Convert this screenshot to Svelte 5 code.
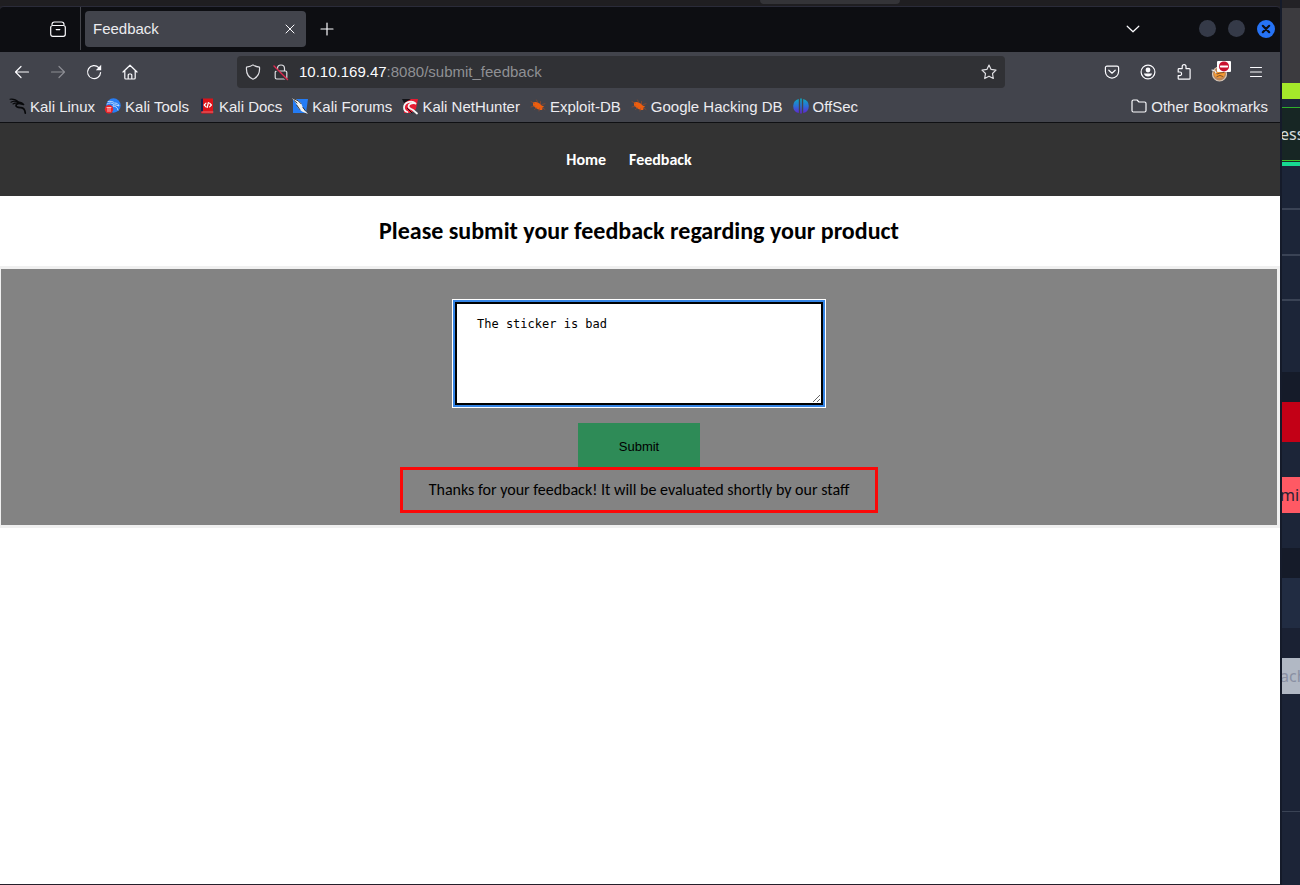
<script>
  let feedback = $state('The sticker is bad');
  let address = $state('10.10.169.47:8080/submit_feedback');

  const bookmarks = [
    { id: 'linux', label: 'Kali Linux' },
    { id: 'tools', label: 'Kali Tools' },
    { id: 'docs', label: 'Kali Docs' },
    { id: 'forums', label: 'Kali Forums' },
    { id: 'hunter', label: 'Kali NetHunter' },
    { id: 'exploit', label: 'Exploit-DB' },
    { id: 'exploit', label: 'Google Hacking DB' },
    { id: 'offsec', label: 'OffSec' }
  ];

  // Stacked bands of the window behind the browser: height, colour, optional text
  const bands = [
    { h: 8, c: '#232226' },
    { h: 75, c: '#3c3b3f' },
    { h: 16, c: '#a4e82a' },
    { h: 8, c: '#1c2639' },
    { h: 1, c: '#2fae2c' },
    { h: 52, c: '#172624', t: 'ess', ink: '#d8dcdc' },
    { h: 1, c: '#3fc52b' },
    { h: 1, c: '#172624' },
    { h: 4, c: '#17d992' },
    { h: 42, c: '#1c2538' },
    { h: 2, c: '#3a4355' },
    { h: 44, c: '#1c2538' },
    { h: 2, c: '#3a4355' },
    { h: 43, c: '#1c2538' },
    { h: 2, c: '#3a4355' },
    { h: 71, c: '#1c2538' },
    { h: 30, c: '#151b29' },
    { h: 40, c: '#c30016' },
    { h: 35, c: '#1c2538' },
    { h: 36, c: '#ff5964', t: 'min', ink: '#2b2233' },
    { h: 35, c: '#1c2538' },
    { h: 30, c: '#151b29' },
    { h: 50, c: '#212c42' },
    { h: 30, c: '#1a2133' },
    { h: 36, c: '#b1b8c4', t: 'ach', ink: '#8a90a3' },
    { h: 117, c: '#1b2336' },
    { h: 1, c: '#3a4355' }
  ];
</script>

{#snippet favicon(id)}
  <svg class="fav" viewBox="0 0 16 16" aria-hidden="true">
    {#if id === 'linux'}
      <path d="M0 1.2C3 .8 6 1.4 8.5 4M1 4.2C3.5 2.8 6 3.2 8.3 4.4M3 6C5 4.7 7 4.7 9 5" fill="none" stroke="#08090b" stroke-width="1.1" />
      <path d="M8 4.5C10 4 12 4.5 13.5 6.5L11.5 6C9 5 6 5.5 6 7.5C6 9.5 8.5 9.5 11 9.7C13.5 10 15 12 15.3 15.2" fill="none" stroke="#08090b" stroke-width="1.7" />
    {:else if id === 'tools'}
      <circle cx="8.5" cy="7.5" r="7.2" fill="#287df4" />
      <path d="M3 3.5C6 3 8 3.5 9.5 5C12 5 13.5 6 14 8L11 7C8.5 6.5 7.5 7 8 8.2C10.5 8 12.5 9.5 13 12M2 6C4.5 4.5 6.5 4.7 8.5 6" fill="none" stroke="#c9e2ff" stroke-width=".9" />
      <circle cx="4" cy="11.3" r="4.2" fill="#ea2429" />
      <path d="M2 9.5h4M3 9.5v4M5 9.5v4" fill="none" stroke="#ffb9b9" stroke-width="1" />
    {:else if id === 'docs'}
      <path d="M2 1.5Q2 .5 3 .5h11v15H3q-1 0-1-1z" fill="#dc1219" />
      <path d="M2 1.5Q2 .5 3 .5h1v13H2z" fill="#17214e" />
      <path d="M3 14h11" stroke="#e59a9a" stroke-width=".7" />
      <path d="M7 5.2L5.2 7 7 8.8M10.6 5.2L12.4 7l-1.8 1.8M9.4 4.5L8.2 9.5" fill="none" stroke="#fff" stroke-width="1.2" />
    {:else if id === 'forums'}
      <path d="M1 1h15l-2 14H1z" fill="#247cf5" />
      <path d="M0 0l5 1.8 4 3.2 2 5 5 6-6-2.5L6 10 4.5 6z" fill="#f0f0ed" />
      <path d="M1 .5l5 2.2 3 3M4.8 7.2l3 4.3M2.2 2.6L5 5M11 9.5l2.5 3.5" fill="none" stroke="#252627" stroke-width=".9" />
    {:else if id === 'hunter'}
      <path d="M3 1h13l-2 10-5 4H2z" fill="#e61b32" />
      <path d="M0 1h9L2 5z" fill="#111216" />
      <path d="M13.5 5.5C9.5 1.5 2 4.5 2 9.5c0 2.5 1.5 4 3.5 4.5M13.5 5.5C10 4.5 6.5 6 6.5 8.5c0 2 2.5 2.2 4.5 3.5l4 3.5" fill="none" stroke="#f4f4f4" stroke-width="1.8" />
      <path d="M5.5 10.5l4.5 4.5" stroke="#111216" stroke-width="1" />
    {:else if id === 'exploit'}
      <path d="M3 4.5C5.5 3 9.5 4.5 11.7 7.5l2.6 1.2-1.8.7-.3 2.6C9 12.4 4.8 10 3 7.3z" fill="#ef5e0e" />
      <path d="M1 3.5l3.5 2M6.5 2L8 5M10.5 3.5v3M1 9l4-1M4.5 11.5L7 9.5M9 13l.8-3M12 6.5l3-.8M12 9.5l3 2" fill="none" stroke="#a94c25" stroke-width=".6" />
    {:else}
      <defs>
        <linearGradient id="sphere" x2="0" y2="1">
          <stop offset="0" stop-color="#0cabbf" /><stop offset=".5" stop-color="#2b6fd8" /><stop offset="1" stop-color="#6322cf" />
        </linearGradient>
      </defs>
      <path d="M5.8.9v14.2A7.3 7.3 0 0 1 5.8.9zM7.2.4h1.6v15.2H7.2zM10.2.9v14.2a7.3 7.3 0 0 0 0-14.2z" fill="url(#sphere)" />
    {/if}
  </svg>
{/snippet}

<div class="desktop">
  <div class="front">
    <div class="strip"><i></i></div>
    <div class="window">
      <header class="tabs">
        <button class="icon view" aria-label="Firefox View">
          <svg viewBox="0 0 18 18"><path d="M3 4.4Q3 2 5.4 2h7.2Q15 2 15 4.4" /><rect x="1.7" y="5.5" width="14.6" height="10.8" rx="2" /><path d="M7.2 9.6h3.6" /></svg>
        </button>
        <div class="tab">
          <span>Feedback</span>
          <button class="icon" aria-label="Close tab"><svg class="x" viewBox="0 0 10 10"><path d="M1 1l8 8M9 1L1 9" /></svg></button>
        </div>
        <button class="icon plus" aria-label="New tab"><svg viewBox="0 0 16 16"><path d="M8 2v12M2 8h12" /></svg></button>
        <button class="icon list" aria-label="List all tabs"><svg viewBox="0 0 16 16"><path d="M2.2 5.2l5.8 5.6 5.8-5.6" /></svg></button>
        <div class="controls">
          <button class="dot" aria-label="Minimize"></button>
          <button class="dot" aria-label="Maximize"></button>
          <button class="dot close" aria-label="Close"><svg viewBox="0 0 10 10"><path d="M1.8 1.8l6.4 6.4M8.2 1.8L1.8 8.2" /></svg></button>
        </div>
      </header>

      <div class="toolbar">
        <div class="group nav">
          <button class="icon" aria-label="Back"><svg viewBox="0 0 16 16"><path d="M14.5 8H1.5M7 2.5L1.5 8 7 13.5" /></svg></button>
          <button class="icon dim" aria-label="Forward"><svg viewBox="0 0 16 16"><path d="M1.5 8h13M9 2.5L14.5 8 9 13.5" /></svg></button>
          <button class="icon" aria-label="Reload"><svg viewBox="0 0 16 16"><path d="M14.6 8.5A6.5 6.5 0 1 1 12.8 3.6" /><path d="M15.2 .8v5.4H9.8z" fill="#fbfbfe" stroke="none" /></svg></button>
          <button class="icon" aria-label="Home"><svg viewBox="0 0 16 16"><path d="M1 8L8 1.2 15 8M2.8 6.5V14q0 1 1 1h8.4q1 0 1-1V6.5M6.2 15v-4q0-1 1-1h1.6q1 0 1 1v4" /></svg></button>
        </div>
        <div class="urlbar">
          <svg viewBox="0 0 16 16" aria-hidden="true"><path d="M8 .9C6 2.5 3.8 2.9 1.5 3.2C1 9 3.2 13.2 8 15.2C12.8 13.2 15 9 14.5 3.2C12.2 2.9 10 2.5 8 .9z" /></svg>
          <svg viewBox="0 0 16 16" aria-hidden="true"><path d="M4.5 7V4.5a3.5 3.5 0 0 1 7 0V7M3.6 7h8.8q1.4 0 1.4 1.4v5.2q0 1.4-1.4 1.4H3.6q-1.4 0-1.4-1.4V8.4Q2.2 7 3.6 7z" /><path d="M1 3l12 12" class="gap" /><path d="M1 2l13.5 13.5" class="slash" /></svg>
          <div class="address">
            <input aria-label="Address" bind:value={address} />
            <span aria-hidden="true"><b>{address.split(':')[0]}</b>{address.slice(address.indexOf(':'))}</span>
          </div>
          <button class="icon" aria-label="Bookmark this page"><svg viewBox="0 0 16 16"><path d="M8 1l2.1 4.4 4.9.7-3.5 3.4.8 5L8 12.2l-4.3 2.3.8-5L1 6.1l4.9-.7z" /></svg></button>
        </div>
        <div class="group tools">
          <button class="icon" aria-label="Save to Pocket"><svg viewBox="0 0 16 16"><path d="M3 2.2h10q1.6 0 1.6 1.6V7.5a6.6 6.6 0 0 1-13.2 0V3.8Q1.4 2.2 3 2.2zM4.8 6.2L8 9.2l3.2-3" /></svg></button>
          <button class="icon" aria-label="Account"><svg viewBox="0 0 16 16"><circle cx="8" cy="8" r="6.9" /><circle cx="8" cy="6" r="2.4" fill="#fbfbfe" stroke="none" /><path d="M3.9 9.4h8.2Q11.3 12.4 8 12.4T3.9 9.4z" fill="#fbfbfe" stroke="none" /></svg></button>
          <button class="icon" aria-label="Extensions"><svg viewBox="0 0 16 16"><path d="M6.2 4.6V2.6a1.9 1.9 0 0 1 3.8 0v2h3.2q.9 0 .9.9v8.8q0 .9-.9.9H3q-.8 0-.8-.8v-2.8h1.6a1.8 1.8 0 0 0 0-3.6H2.2V5.4q0-.8.8-.8z" /></svg></button>
          <button class="icon proxy" aria-label="FoxyProxy">
            <svg viewBox="0 0 20 20"><circle cx="9.5" cy="12" r="7" fill="#bd8556" stroke="#d6c7b8" /><path d="M3.5 9.5l3 .5 3.5-1 5 1-1 5-5 1-4-1.5z" fill="#f79a32" stroke="none" /><path d="M4 9.5l3 2.5 3-1 4-.5M7 14.5l3-1 3 1" stroke="#6d482d" stroke-width=".9" /><path d="M2 8l3 1 1 2" stroke="#eee" /><rect x="7" y="-1" width="14" height="11" rx="1" fill="#fff" stroke="none" /><circle cx="14" cy="4.4" r="5" fill="#c8102e" stroke="none" /><path d="M10.8 4.4h6.4" stroke="#fff" stroke-width="2" /></svg>
          </button>
          <button class="icon" aria-label="Menu"><svg viewBox="0 0 16 16"><path d="M2.5 3.5h11M2.5 8h11M2.5 12.5h11" /></svg></button>
        </div>
      </div>

      <nav class="bookmarks" aria-label="Bookmarks">
        {#each bookmarks as mark}
          <a href="#top">{@render favicon(mark.id)}{mark.label}</a>
        {/each}
        <a class="other" href="#top"><svg class="fav line" viewBox="0 0 16 16" aria-hidden="true"><path d="M1 12.5v-9Q1 2 2.5 2H6l2 2h5.5Q15 4 15 5.5v7q0 1.5-1.5 1.5h-11Q1 14 1 12.5z" /></svg>Other Bookmarks</a>
      </nav>

      <main class="page" id="top">
        <nav class="site"><a href="#top">Home</a><a href="#top">Feedback</a></nav>
        <h1>Please submit your feedback regarding your product</h1>
        <form onsubmit={(e) => e.preventDefault()}>
          <textarea aria-label="Feedback" spellcheck="false" bind:value={feedback}></textarea>
          <button class="submit">Submit</button>
          <p>Thanks for your feedback! It will be evaluated shortly by our staff</p>
        </form>
      </main>
    </div>
  </div>

  <aside class="behind">
    {#each bands as band}
      <div style:height="{band.h}px" style:background={band.c} style:color={band.ink}>{#if band.t}<span>{band.t}</span>{/if}</div>
    {/each}
  </aside>
</div>

<style>
  :global(body) { margin: 0; background: #1b2336; }
  .desktop { display: grid; grid-template-columns: minmax(0, 1fr) 20px; min-height: 100vh; font-family: "Liberation Sans", Arial, sans-serif; font-size: 15px; color: #ececf0; }
  .front { display: flex; flex-direction: column; background: #232226; }
  .strip { height: 6px; display: flex; justify-content: flex-end; background: #1f1e21; }
  .strip i { width: 140px; height: 4px; margin-right: 380px; border-radius: 0 0 4px 4px; background: #343438; }
  .window { flex: 1; display: flex; flex-direction: column; border-top: 1px solid #2a2b39; border-bottom: 1px solid #251f2b; border-radius: 4px 4px 0 0; overflow: hidden; background: #0d0e12; }
  .behind { border-left: 2px solid #151b2a; box-sizing: border-box; background: #1c2437; overflow: hidden; }
  .behind div { display: flex; align-items: center; font: 16px "Noto Sans", sans-serif; white-space: nowrap; }
  .behind span { margin-left: -2px; }

  button, input, textarea { font: inherit; color: inherit; border: 0; margin: 0; padding: 0; background: none; }
  a { color: inherit; text-decoration: none; }
  svg { display: block; flex: none; width: 16px; height: 16px; fill: none; stroke: #fbfbfe; stroke-width: 1.2; stroke-linecap: round; stroke-linejoin: round; overflow: visible; }
  .icon { display: grid; place-items: center; }

  .tabs { display: flex; align-items: center; height: 43px; padding-bottom: 2px; }
  .view { width: 44px; height: 43px; padding-left: 36px; border-right: 1px solid #45464c; box-sizing: content-box; }
  .view svg { width: 18px; height: 18px; }
  .tab { display: flex; align-items: center; justify-content: space-between; width: 221px; height: 36px; margin-left: 4px; padding: 0 11px 0 8px; box-sizing: border-box; border-radius: 4px; background: #42444c; }
  .tab svg { width: 10px; height: 10px; stroke-width: 1; }
  .plus { margin-left: 13px; }
  .list { margin-left: auto; }
  .controls { display: flex; align-items: center; gap: 12px; margin: 0 5px 0 58px; }
  .dot { display: grid; place-items: center; width: 17px; height: 17px; border-radius: 50%; background: #353a48; }
  .close { width: 18px; height: 18px; background: #2673f5; }
  .close svg { width: 10px; height: 10px; stroke: #0b0d14; stroke-width: 2.2; }

  .toolbar { display: flex; align-items: center; height: 40px; padding: 0 16px 0 14px; background: #42444c; }
  .group { display: flex; gap: 20px; }
  .nav { flex: 0 0 223px; }
  .nav .dim { opacity: .4; }
  .tools { margin-left: 99px; }
  .urlbar { flex: 1; display: flex; align-items: center; gap: 12px; height: 32px; padding: 0 8px; border-radius: 4px; background: #303135; }
  .urlbar svg { stroke: #dedee2; }
  .urlbar .gap { stroke: #303135; stroke-width: 2; }
  .urlbar .slash { stroke: #e22850; stroke-width: 1.4; }
  .address { flex: 1; display: grid; margin-left: -2px; }
  .address > * { grid-area: 1 / 1; line-height: 20px; }
  .address input { color: transparent; caret-color: #fff; outline: 0; min-width: 0; }
  .address span { pointer-events: none; color: #8f9094; white-space: pre; }
  .address b { font-weight: 400; color: #fbfbfe; }
  .proxy svg { width: 20px; height: 20px; margin: -2px; }

  .bookmarks { display: flex; align-items: center; gap: 10px; height: 28px; padding: 0 12px 2px 10px; border-bottom: 1px solid #0f1013; background: #42444c; white-space: nowrap; }
  .bookmarks a { display: flex; align-items: center; gap: 4px; }
  .bookmarks .other { margin-left: auto; }
  .fav { stroke: none; }
  .line { stroke: #fbfbfe; }

  .page { flex: 1; background: #fff; color: #000; font-family: Carlito, Lato, sans-serif; }
  .site { display: flex; justify-content: center; align-items: center; gap: 23px; height: 73px; padding-right: 22px; background: #333; color: #fff; font-size: 16px; font-weight: 700; }
  h1 { margin: 19px 0; padding-right: 2px; font-size: 24px; line-height: 32px; text-align: center; }
  form { display: flex; flex-direction: column; align-items: center; padding: 33px 0 12px; border: solid #f0f0f0; border-width: 3px 3px 3px 1px; background: #838383; }
  textarea { width: 368px; height: 103px; box-sizing: border-box; padding: 11px 20px; border: 2px solid #000; outline: 0; box-shadow: 0 0 0 2px #3584e4, 0 0 0 3px #fff; border-radius: 0; background: #fff; color: #000; font: 12px/18px "DejaVu Sans Mono", monospace; }
  .submit { width: 122px; height: 47px; margin-top: 18px; background: #2e8b57; color: #000; font: 13px "Liberation Sans", Arial, sans-serif; }
  p { position: relative; margin: -3px 0 0; padding: 0 26px; border: 3px solid #fb0808; font-size: 16px; line-height: 40px; }
</style>
